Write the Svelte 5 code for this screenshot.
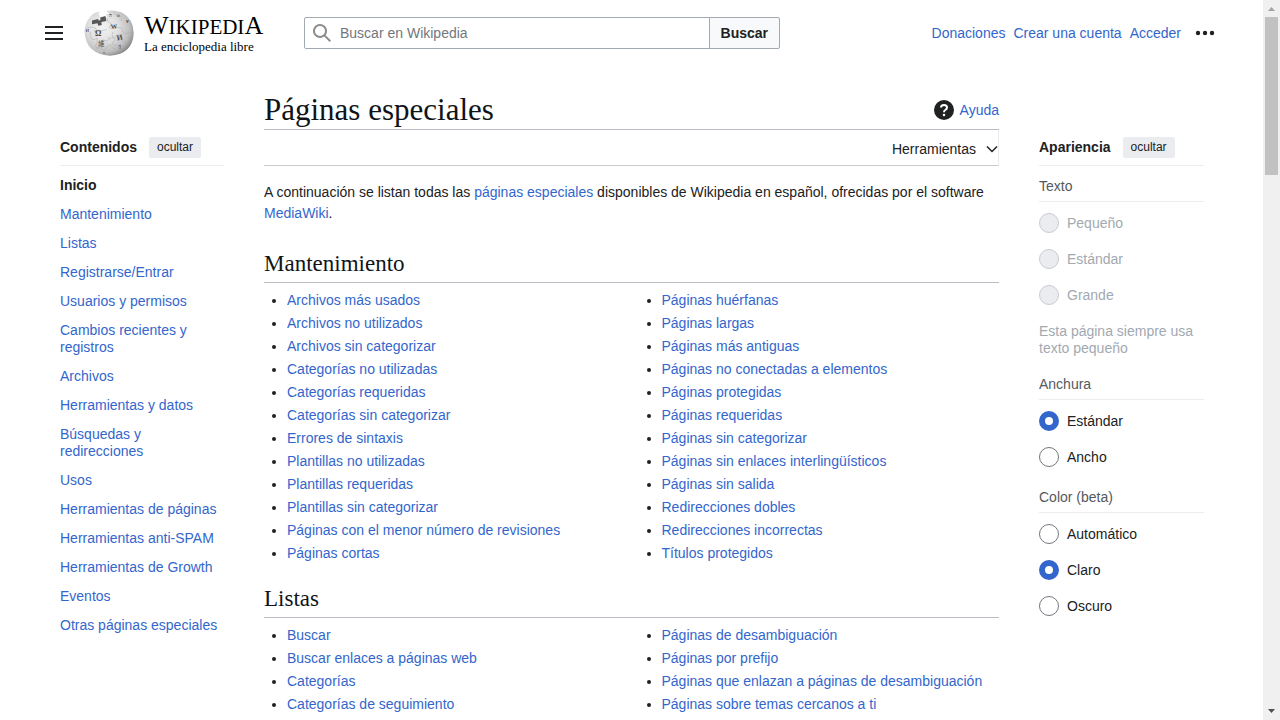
<script>
  const toc = [
    'Mantenimiento', 'Listas', 'Registrarse/Entrar', 'Usuarios y permisos',
    'Cambios recientes y registros', 'Archivos', 'Herramientas y datos',
    'Búsquedas y redirecciones', 'Usos', 'Herramientas de páginas',
    'Herramientas anti-SPAM', 'Herramientas de Growth', 'Eventos',
    'Otras páginas especiales'
  ];

  const sections = [
    {
      title: 'Mantenimiento',
      columns: [
        ['Archivos más usados', 'Archivos no utilizados', 'Archivos sin categorizar',
          'Categorías no utilizadas', 'Categorías requeridas', 'Categorías sin categorizar',
          'Errores de sintaxis', 'Plantillas no utilizadas', 'Plantillas requeridas',
          'Plantillas sin categorizar', 'Páginas con el menor número de revisiones', 'Páginas cortas'],
        ['Páginas huérfanas', 'Páginas largas', 'Páginas más antiguas',
          'Páginas no conectadas a elementos', 'Páginas protegidas', 'Páginas requeridas',
          'Páginas sin categorizar', 'Páginas sin enlaces interlingüísticos', 'Páginas sin salida',
          'Redirecciones dobles', 'Redirecciones incorrectas', 'Títulos protegidos']
      ]
    },
    {
      title: 'Listas',
      columns: [
        ['Buscar', 'Buscar enlaces a páginas web', 'Categorías', 'Categorías de seguimiento'],
        ['Páginas de desambiguación', 'Páginas por prefijo',
          'Páginas que enlazan a páginas de desambiguación', 'Páginas sobre temas cercanos a ti']
      ]
    }
  ];

  const settings = [
    { name: 'texto', title: 'Texto', options: ['Pequeño', 'Estándar', 'Grande'], disabled: true,
      note: 'Esta página siempre usa texto pequeño' },
    { name: 'anchura', title: 'Anchura', options: ['Estándar', 'Ancho'], value: 'Estándar' },
    { name: 'color', title: 'Color (beta)', options: ['Automático', 'Claro', 'Oscuro'], value: 'Claro' }
  ];
</script>

<div class="window">
  <div class="page">
    <header>
      <button class="icon-button" aria-label="Menú principal">
        <svg width="20" height="20" viewBox="0 0 20 20"><path d="M1 3h18v2H1zm0 6h18v2H1zm0 6h18v2H1z" fill="#202122" /></svg>
      </button>
      <a class="logo" href="#inicio">
        <svg class="globe" width="50" height="50" viewBox="0 0 50 50" aria-hidden="true">
          <defs>
            <radialGradient id="ball" cx="38%" cy="38%" r="68%">
              <stop offset="0" stop-color="#f2f2f2" />
              <stop offset=".45" stop-color="#e0e0e0" />
              <stop offset=".8" stop-color="#bdbdbd" />
              <stop offset="1" stop-color="#858585" />
            </radialGradient>
          </defs>
          <path d="M7 8Q8.500 5.500 12 4.500L14 4L15.500 3.500L14.500 6L16 8L15 11L19 11.500L23 9L22 6.500L25 5.500L22.500 3Q29 2 34 3.500L38 4.500Q49.500 11 49.700 25Q49 46 26 47.800Q2 46 .5 24Q.5 15 7 8Z" fill="url(#ball)" />
          <path d="M8 12.500l6-1.500.8 1.500q2 0 1.700-1.500l-.5-1.500 5.500-1.500.8 5-5 1 .5 3-3.500.8-.8-2.500-5.500 1z" fill="#585858" />
          <path d="M3 20q5-2 8 0t-1 3q2 2 7 0t6-1m0-12q0 4 3 5t-1 4q2 3 6 1t8 1m-10 3q-2 5 1 6t-2 5q2 3 5 2m-27-13q0 5 2 7t5-1q1 4-1 7t4 4m2-9q5 2 8-1m12-9q1 5 6 3t4 4M24 30q6 1 8-2t6 2q0 5 4 4M12 40q4-2 6 1t5-2 7 2q3-2 7-1m-7-36q1 4 5 4t2 5" fill="none" stroke="#a8a8a8" stroke-width=".5" />
          <g fill="#444" font-family="Liberation Serif, serif" font-weight="bold">
            <text x="11" y="27.500" font-size="8">Ω</text>
            <text x="26.500" y="20.500" font-size="6.500" transform="rotate(-8 30 18)">W</text>
            <text x="32.500" y="32" font-size="7.500" transform="rotate(-12 35 29)">И</text>
            <text x="14" y="37.500" font-size="6.500" font-weight="normal" font-family="Noto Sans CJK SC, sans-serif">維</text>
            <text x="34.500" y="41" font-size="5.500" transform="rotate(-15 36 39)">7</text>
            <text x="1.500" y="24" font-size="5" font-weight="normal">И</text>
            <text x="42" y="15" font-size="6">ν</text>
            <text x="25" y="8.500" font-size="5">ה</text>
            <text x="33" y="9" font-size="5" font-weight="normal">й</text>
            <text x="19" y="46" font-size="4.500" font-weight="normal">т</text>
          </g>
        </svg>
        <span class="brand">
          <span class="wordmark"><span class="big">W</span>IKIPEDI<span class="big">A</span></span>
          <span class="tagline">La enciclopedia libre</span>
        </span>
      </a>
      <form class="search" role="search">
        <label class="field">
          <svg width="20" height="20" viewBox="0 0 20 20" aria-hidden="true"><path d="M12.200 13.600a7 7 0 1 1 1.400-1.400l5.400 5.400-1.400 1.400zM3 8a5 5 0 1 0 10 0A5 5 0 0 0 3 8" fill="#8c8d8f" fill-rule="evenodd" /></svg>
          <input type="search" placeholder="Buscar en Wikipedia" aria-label="Buscar en Wikipedia" />
        </label>
        <button type="button">Buscar</button>
      </form>
      <nav class="user">
        <a href="#donar">Donaciones</a>
        <a href="#cuenta">Crear una cuenta</a>
        <a href="#acceder">Acceder</a>
        <button class="icon-button" aria-label="Herramientas personales">
          <svg width="20" height="20" viewBox="0 0 20 20"><g fill="#202122"><circle cx="3" cy="10" r="2.200" /><circle cx="10" cy="10" r="2.200" /><circle cx="17" cy="10" r="2.200" /></g></svg>
        </button>
      </nav>
    </header>

    <div class="body">
      <nav class="side">
        <div class="side-head"><h2>Contenidos</h2><button>ocultar</button></div>
        <ul class="toc">
          <li><a class="current" href="#inicio">Inicio</a></li>
          {#each toc as item}
            <li><a href="#{item}">{item}</a></li>
          {/each}
        </ul>
      </nav>

      <main>
        <div class="title">
          <h1>Páginas especiales</h1>
          <a class="help" href="#ayuda">
            <svg width="20" height="20" viewBox="0 0 20 20" aria-hidden="true">
              <circle cx="10" cy="10" r="10" fill="#202122" />
              <path d="M7 7.600Q7 5 10 5t3 2.500q0 1.500-1.700 2.500-1.300.8-1.300 2.200" fill="none" stroke="#fff" stroke-width="2" />
              <circle cx="10" cy="14.900" r="1.250" fill="#fff" />
            </svg>
            Ayuda
          </a>
        </div>
        <div class="toolbar">
          <button>Herramientas
            <svg width="12" height="12" viewBox="0 0 12 12" aria-hidden="true"><path d="M1 3.500l5 5 5-5" fill="none" stroke="#202122" stroke-width="1.500" /></svg>
          </button>
        </div>
        <p class="intro">
          A continuación se listan todas las <a href="#especiales">páginas especiales</a> disponibles de Wikipedia en español, ofrecidas por el software <a href="#mediawiki">MediaWiki</a>.
        </p>
        {#each sections as section}
          <section id={section.title}>
            <h2>{section.title}</h2>
            <div class="columns">
              {#each section.columns as column}
                <ul>
                  {#each column as item}
                    <li><a href="#{item}">{item}</a></li>
                  {/each}
                </ul>
              {/each}
            </div>
          </section>
        {/each}
      </main>

      <aside class="side">
        <div class="side-head"><h2>Apariencia</h2><button>ocultar</button></div>
        <form class="settings">
          {#each settings as group}
            <div role="radiogroup" aria-label={group.title}>
              <h3>{group.title}</h3>
              {#each group.options as option}
                <label class:disabled={group.disabled}>
                  <input type="radio" name={group.name} value={option} checked={group.value === option} disabled={group.disabled} />
                  {option}
                </label>
              {/each}
              {#if group.note}<p>{group.note}</p>{/if}
            </div>
          {/each}
        </form>
      </aside>
    </div>
  </div>

  <div class="scrollbar" aria-hidden="true">
    <svg width="17" height="17" viewBox="0 0 17 17"><path d="M5 11h7L8.500 7z" fill="#a3a3a3" /></svg>
    <div class="thumb"></div>
    <svg width="17" height="17" viewBox="0 0 17 17"><path d="M5 6h7l-3.500 4z" fill="#505050" /></svg>
  </div>
</div>

<style>
  :global(body) { overflow: hidden; background: #fff; }
  .window {
    display: flex;
    height: 100vh;
    overflow: hidden;
    color: #202122;
    font: 14px/17px "Liberation Sans", Arial, sans-serif;
  }
  .page { flex: 1; min-width: 0; overflow: hidden; }
  a { color: #36c; text-decoration: none; }
  button, input { font: inherit; color: inherit; }
  button { border: 0; padding: 0; background: none; cursor: pointer; }
  ul { list-style: none; margin: 0; padding: 0; }
  h1, h2, h3, p { margin: 0; }
  svg { display: block; flex: none; }

  header { display: flex; align-items: center; height: 66px; padding: 0 48px 0 44px; }
  .logo { display: flex; align-items: center; gap: 10px; margin-left: 20px; color: #000; }
  .brand { display: flex; flex-direction: column; width: 120px; font-family: "Liberation Serif", serif; white-space: nowrap; }
  .wordmark { font-size: 21px; line-height: 25px; }
  .big { font-size: 26px; }
  .tagline { font-size: 13px; line-height: 14px; }
  .search { flex: 0 1 476px; display: flex; margin-left: 40px; }
  .field {
    flex: 1;
    display: flex;
    align-items: center;
    gap: 8px;
    min-width: 0;
    padding-left: 7px;
    border: 1px solid #a2a9b1;
    border-radius: 2px 0 0 2px;
  }
  .field input { flex: 1; min-width: 0; height: 30px; box-sizing: border-box; border: 0; padding: 0; outline: 0; background: none; }
  .field input::placeholder { color: #72777d; opacity: 1; }
  .search button {
    margin-left: -1px;
    padding: 0 11px;
    border: 1px solid #a2a9b1;
    border-radius: 0 2px 2px 0;
    background: #f8f9fa;
    font-weight: bold;
  }
  .user { display: flex; align-items: center; gap: 8px; margin-left: auto; white-space: nowrap; }
  .user button { margin-left: 6px; }

  .body { display: grid; grid-template-columns: 164px minmax(0, 1fr) 165px; gap: 40px; padding: 0 59px 0 60px; }
  .side { padding-top: 71px; }
  .side-head { display: flex; align-items: center; gap: 12px; padding-bottom: 7px; border-bottom: 1px solid #eaecf0; }
  .side-head h2 { font-size: 14px; }
  .side-head button { height: 21px; padding: 0 8px; border-radius: 2px; background: #eaecf0; font-size: 12px; }
  .toc { padding-top: 5px; }
  .toc a { display: block; padding: 6px 0; }
  .toc .current { color: #202122; font-weight: bold; }

  main { padding-top: 25px; }
  .title { display: flex; align-items: center; justify-content: space-between; border-bottom: 1px solid #b8bdc4; }
  h1 { font: 31px/38px "Liberation Serif", serif; color: #101418; }
  .help { display: flex; align-items: center; gap: 6px; }
  .toolbar { display: flex; justify-content: flex-end; height: 35px; border-bottom: 1px solid #c8ccd1; border-right: 1px solid #eaecf0; }
  .toolbar button { display: flex; align-items: center; gap: 10px; padding-top: 3px; }
  .intro { padding: 16px 0 24px; line-height: 21px; }
  section h2 { padding-bottom: 3px; border-bottom: 1px solid #b8bdc4; font: 23px/31px "Liberation Serif", serif; color: #101418; }
  .columns { display: grid; grid-template-columns: 1fr 1fr; gap: 14px; padding: 6px 0 18px; }
  .columns ul { list-style: disc; padding-left: 23px; line-height: 23px; }

  .settings { display: flex; flex-direction: column; gap: 14px; padding-top: 12px; }
  .settings h3 { margin-bottom: 3px; padding-bottom: 6px; border-bottom: 1px solid #eaecf0; font-size: 14px; font-weight: normal; color: #54595d; }
  .settings label { display: flex; align-items: center; gap: 8px; height: 36px; }
  .settings .disabled { color: #a2a9b1; }
  .settings p { padding: 10px 0 5px; color: #a2a9b1; }
  .settings input { appearance: none; box-sizing: border-box; width: 20px; height: 20px; margin: 0; border: 1px solid #72777d; border-radius: 50%; background: #fff; }
  .settings input:checked { border: 6px solid #36c; }
  .settings input:disabled { border-color: #c8ccd1; background: #eaecf0; }

  .scrollbar { display: flex; flex-direction: column; width: 17px; background: #f0f0f0; }
  .scrollbar .thumb { height: 22%; margin: 0 2px auto; background: #c1c1c1; }
</style>
